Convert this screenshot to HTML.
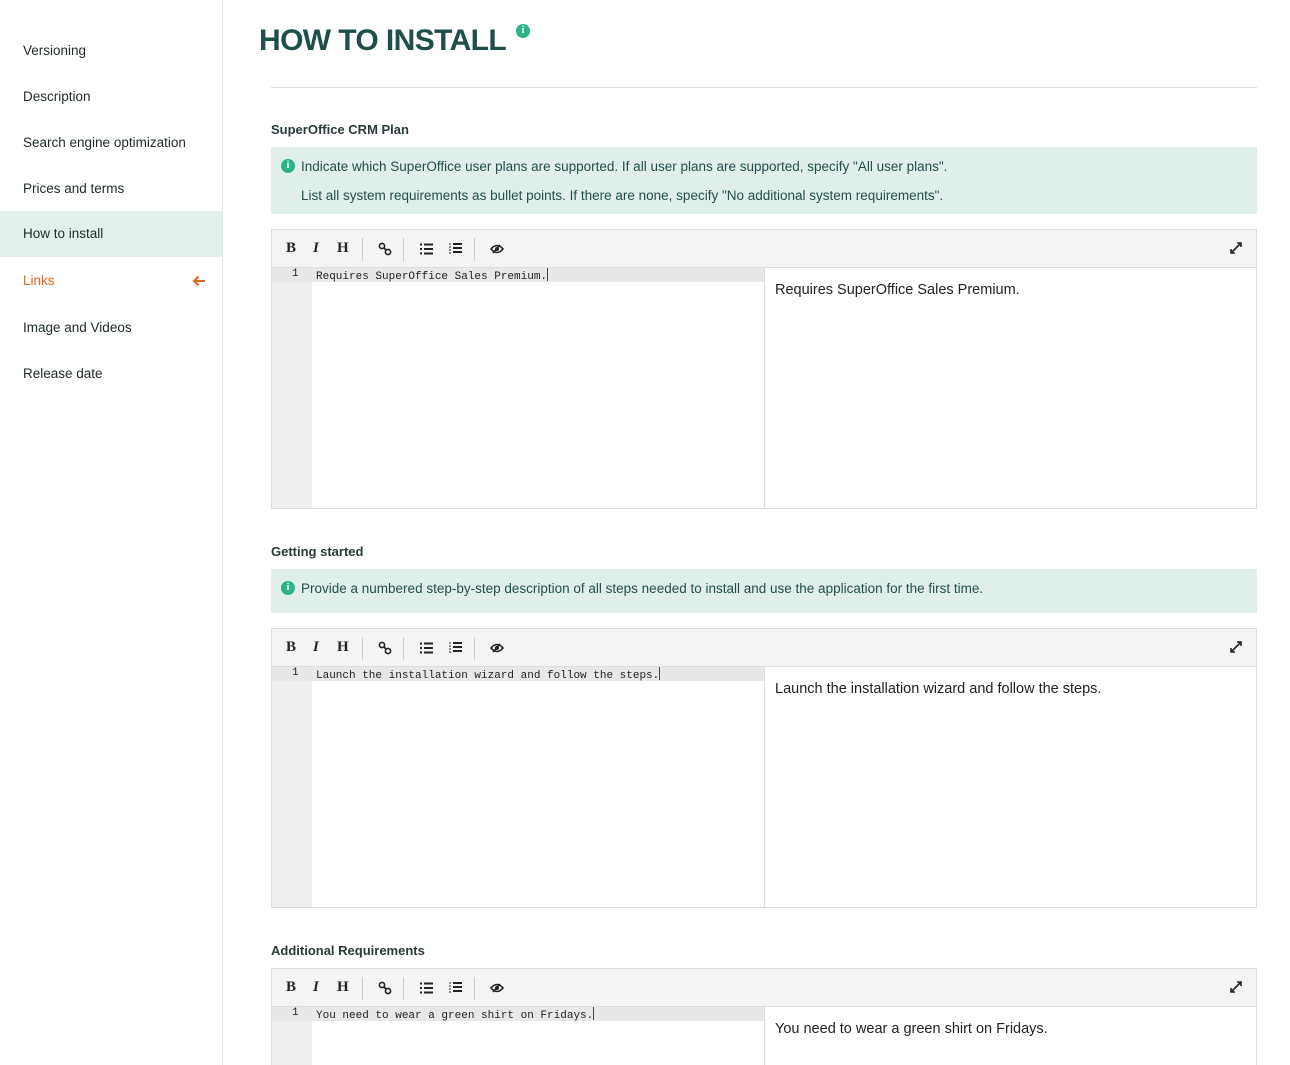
<!DOCTYPE html>
<html><head><meta charset="utf-8"><style>
*{box-sizing:border-box;margin:0;padding:0}
html,body{width:1290px;height:1065px;overflow:hidden}
body{background:#fff;font-family:"Liberation Sans",sans-serif;color:#222;position:relative}
.side{position:absolute;left:0;top:0;width:223px;height:1065px;border-right:1px solid #e6e6e6}
.nav{position:absolute;left:0;width:222px;height:46px;line-height:46px;padding-left:23px;font-size:13.5px;color:#1f2a2a}
.nav.act{background:#e3f0ec}
.nav.link{color:#e0661f}
.arrow{position:absolute;right:16px;top:17px}
h1{position:absolute;left:259px;top:24px;font-size:30px;font-weight:bold;color:#1e4f4a;letter-spacing:-0.6px}
.dot{position:absolute;width:14px;height:14px;border-radius:50%;background:#2bb38a;color:#fff;font-size:10px;font-weight:bold;text-align:center;line-height:14px;font-family:"Liberation Serif",serif}
.hr{position:absolute;left:271px;top:87px;width:986px;height:1px;background:#ddd}
.lbl{position:absolute;left:271px;font-size:13px;font-weight:bold;color:#2a3a3a}
.info{position:absolute;left:271px;width:986px;background:#e1efeb;font-size:13.5px;color:#1e4f4a}
.info p{position:absolute;left:30px;white-space:nowrap}
.ed{position:absolute;left:271px;width:986px;border:1px solid #ddd;background:#fff}
.tb{position:absolute;left:0;top:0;right:0;height:38px;background:#f4f4f4;border-bottom:1px solid #ddd}
.tb span{position:absolute;top:10px;font-family:"Liberation Serif",serif;font-weight:bold;font-size:15px;color:#222}
.tb svg{position:absolute}
.sep{position:absolute;top:8px;width:1px;height:23px;background:#ccc}
.gut{position:absolute;left:0;top:38px;width:40px;bottom:0;background:#efefef}
.row{position:absolute;left:0;top:38px;width:492px;height:14px;background:#e8e8e8}
.ln{position:absolute;left:20px;top:38px;font-family:"Liberation Mono",monospace;font-size:11px}
.code{position:absolute;left:44px;top:38px;font-family:"Liberation Mono",monospace;font-size:11px;white-space:nowrap}
.code i{display:inline-block;width:1px;height:13px;background:#444;vertical-align:-2px}
.div{position:absolute;left:492px;top:38px;bottom:0;width:1px;background:#ddd}
.pv{position:absolute;left:503px;top:52px;font-size:14.5px;color:#222;white-space:nowrap}
</style></head><body>
<div class="side">
<div class="nav" style="top:28px">Versioning</div>
<div class="nav" style="top:74px">Description</div>
<div class="nav" style="top:120px">Search engine optimization</div>
<div class="nav" style="top:166px">Prices and terms</div>
<div class="nav act" style="top:211px">How to install</div>
<div class="nav link" style="top:258px">Links<svg class="arrow" width="14" height="12" viewBox="0 0 14 12"><path d="M13 6H2M6.5 1.5L2 6l4.5 4.5" fill="none" stroke="#e0661f" stroke-width="2"/></svg></div>
<div class="nav" style="top:305px">Image and Videos</div>
<div class="nav" style="top:351px">Release date</div>
</div>
<h1>HOW TO INSTALL</h1>
<div class="dot" style="left:516px;top:24px">i</div>
<div class="hr"></div>

<div class="lbl" style="top:122px">SuperOffice CRM Plan</div>
<div class="info" style="top:147px;height:67px">
<div class="dot" style="left:10px;top:12px">i</div>
<p style="top:12px">Indicate which SuperOffice user plans are supported. If all user plans are supported, specify "All user plans".</p>
<p style="top:41px">List all system requirements as bullet points. If there are none, specify "No additional system requirements".</p>
</div>

<div class="lbl" style="top:544px">Getting started</div>
<div class="info" style="top:569px;height:44px">
<div class="dot" style="left:10px;top:12px">i</div>
<p style="top:12px">Provide a numbered step-by-step description of all steps needed to install and use the application for the first time.</p>
</div>

<div class="lbl" style="top:943px">Additional Requirements</div>

<div class="ed" style="top:229px;height:280px">
<div class="tb"><span style="left:14px">B</span><span style="left:41px;font-style:italic">I</span><span style="left:65px">H</span><div class="sep" style="left:90px"></div>
<svg style="left:106px;top:12px" width="14" height="14" viewBox="0 0 14 14"><circle cx="4" cy="4" r="2.6" fill="none" stroke="#222" stroke-width="1.6"/><circle cx="10" cy="10" r="2.6" fill="none" stroke="#222" stroke-width="1.6"/><path d="M5.5 5.5l3 3" stroke="#222" stroke-width="1.6"/></svg>
<div class="sep" style="left:131px"></div>
<svg style="left:148px;top:13px" width="13" height="12" viewBox="0 0 13 12"><path d="M0 1.5h2M0 6h2M0 10.5h2M4 1.5h9M4 6h9M4 10.5h9" stroke="#222" stroke-width="2"/></svg>
<svg style="left:177px;top:12px" width="13" height="14" viewBox="0 0 13 14"><path d="M0 2h2M0 5h2M0 8h2M0 11h2" stroke="#222" stroke-width="1"/><path d="M4 2h9M4 6h9M4 10h9" stroke="#222" stroke-width="2"/></svg>
<div class="sep" style="left:202px"></div>
<svg style="left:218px;top:14px" width="14" height="10" viewBox="0 0 14 10"><path d="M1 5Q7-2 13 5Q7 12 1 5Z" fill="none" stroke="#222" stroke-width="1.6"/><circle cx="7" cy="5" r="2" fill="#222"/><path d="M3 9L10 1" stroke="#222" stroke-width="1.6"/></svg>
<svg style="right:14px;top:12px" width="12" height="12" viewBox="0 0 12 12"><path d="M1 11L11 1M7 1h4v4M1 7v4h4" fill="none" stroke="#222" stroke-width="1.6"/></svg></div>
<div class="gut"></div><div class="row"></div><div class="ln">1</div><div class="code">Requires SuperOffice Sales Premium.<i></i></div><div class="div"></div>
<div class="pv">Requires SuperOffice Sales Premium.</div>
</div>

<div class="ed" style="top:628px;height:280px">
<div class="tb"><span style="left:14px">B</span><span style="left:41px;font-style:italic">I</span><span style="left:65px">H</span><div class="sep" style="left:90px"></div>
<svg style="left:106px;top:12px" width="14" height="14" viewBox="0 0 14 14"><circle cx="4" cy="4" r="2.6" fill="none" stroke="#222" stroke-width="1.6"/><circle cx="10" cy="10" r="2.6" fill="none" stroke="#222" stroke-width="1.6"/><path d="M5.5 5.5l3 3" stroke="#222" stroke-width="1.6"/></svg>
<div class="sep" style="left:131px"></div>
<svg style="left:148px;top:13px" width="13" height="12" viewBox="0 0 13 12"><path d="M0 1.5h2M0 6h2M0 10.5h2M4 1.5h9M4 6h9M4 10.5h9" stroke="#222" stroke-width="2"/></svg>
<svg style="left:177px;top:12px" width="13" height="14" viewBox="0 0 13 14"><path d="M0 2h2M0 5h2M0 8h2M0 11h2" stroke="#222" stroke-width="1"/><path d="M4 2h9M4 6h9M4 10h9" stroke="#222" stroke-width="2"/></svg>
<div class="sep" style="left:202px"></div>
<svg style="left:218px;top:14px" width="14" height="10" viewBox="0 0 14 10"><path d="M1 5Q7-2 13 5Q7 12 1 5Z" fill="none" stroke="#222" stroke-width="1.6"/><circle cx="7" cy="5" r="2" fill="#222"/><path d="M3 9L10 1" stroke="#222" stroke-width="1.6"/></svg>
<svg style="right:14px;top:12px" width="12" height="12" viewBox="0 0 12 12"><path d="M1 11L11 1M7 1h4v4M1 7v4h4" fill="none" stroke="#222" stroke-width="1.6"/></svg></div>
<div class="gut"></div><div class="row"></div><div class="ln">1</div><div class="code">Launch the installation wizard and follow the steps.<i></i></div><div class="div"></div>
<div class="pv">Launch the installation wizard and follow the steps.</div>
</div>

<div class="ed" style="top:968px;height:120px">
<div class="tb"><span style="left:14px">B</span><span style="left:41px;font-style:italic">I</span><span style="left:65px">H</span><div class="sep" style="left:90px"></div>
<svg style="left:106px;top:12px" width="14" height="14" viewBox="0 0 14 14"><circle cx="4" cy="4" r="2.6" fill="none" stroke="#222" stroke-width="1.6"/><circle cx="10" cy="10" r="2.6" fill="none" stroke="#222" stroke-width="1.6"/><path d="M5.5 5.5l3 3" stroke="#222" stroke-width="1.6"/></svg>
<div class="sep" style="left:131px"></div>
<svg style="left:148px;top:13px" width="13" height="12" viewBox="0 0 13 12"><path d="M0 1.5h2M0 6h2M0 10.5h2M4 1.5h9M4 6h9M4 10.5h9" stroke="#222" stroke-width="2"/></svg>
<svg style="left:177px;top:12px" width="13" height="14" viewBox="0 0 13 14"><path d="M0 2h2M0 5h2M0 8h2M0 11h2" stroke="#222" stroke-width="1"/><path d="M4 2h9M4 6h9M4 10h9" stroke="#222" stroke-width="2"/></svg>
<div class="sep" style="left:202px"></div>
<svg style="left:218px;top:14px" width="14" height="10" viewBox="0 0 14 10"><path d="M1 5Q7-2 13 5Q7 12 1 5Z" fill="none" stroke="#222" stroke-width="1.6"/><circle cx="7" cy="5" r="2" fill="#222"/><path d="M3 9L10 1" stroke="#222" stroke-width="1.6"/></svg>
<svg style="right:14px;top:12px" width="12" height="12" viewBox="0 0 12 12"><path d="M1 11L11 1M7 1h4v4M1 7v4h4" fill="none" stroke="#222" stroke-width="1.6"/></svg></div>
<div class="gut"></div><div class="row"></div><div class="ln">1</div><div class="code">You need to wear a green shirt on Fridays.<i></i></div><div class="div"></div>
<div class="pv">You need to wear a green shirt on Fridays.</div>
</div>
</body></html>
